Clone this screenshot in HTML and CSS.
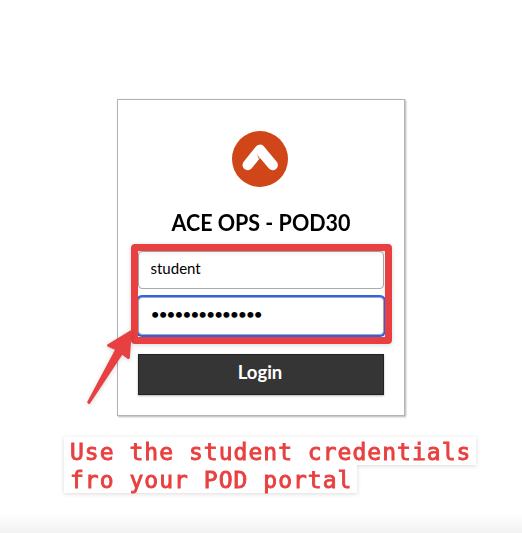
FILE: index.html
```html
<!DOCTYPE html>
<html lang="en">
<head>
<meta charset="utf-8">
<title>ACE OPS - POD30</title>
<link rel="stylesheet" href="styles.css">
</head>
<body>
<main class="page">
  <form class="card">
    <svg class="logo" viewBox="0 0 56 56" aria-hidden="true">
      <circle cx="28" cy="28" r="28" fill="#d04618"/>
      <path d="M15.7 34 L28 18.8 L40.7 34" fill="none" stroke="#fff" stroke-width="10.4" stroke-linecap="round" stroke-linejoin="round"/>
      <path d="M25 23.4 L27.7 27 L26.9 27.9 Z" fill="#d04618"/>
    </svg>
    <h1 class="title">ACE OPS - POD30</h1>
    <input class="field" type="text" value="student" aria-label="Username">
    <div class="field password" aria-label="Password">••••••••••••••</div>
    <button class="login" type="button">Login</button>
  </form>
</main>
<div class="highlight"></div>
<svg class="arrow" viewBox="80 322 60 90" aria-hidden="true">
  <path d="M132 329.5 L107.4 344.6 Q106.6 346 108 346.8 L115 349.7 L87.2 402 Q88 405 90 403.5 L122.3 354.8 L127.5 358.8 Q129.4 359.5 129.8 358 Z" fill="#e84040"/>
</svg>
<p class="note"><span class="line">Use the student credentials</span><span class="line second">fro your POD portal</span></p>
</body>
</html>
```

FILE: styles.css
```css
* {
  box-sizing: border-box;
}

body {
  margin: 0;
  height: 533px;
  overflow: hidden;
  position: relative;
  background: linear-gradient(#fff 0, #fff 512px, #f2f2f2 533px);
  font-family: Lato, sans-serif;
  color: #000;
}

.page {
  padding: 99px 0 0 117px;
}

.card {
  display: flex;
  flex-direction: column;
  width: 288px;
  height: 317px;
  padding: 31px 20px 0;
  background: #fff;
  border: 1px solid #b3b3b3;
  box-shadow: 1px 1px 2px rgba(0, 0, 0, 0.3);
}

.logo {
  width: 56px;
  height: 56px;
  margin-left: 94px;
}

.title {
  margin: 21px 0 15px;
  height: 28px;
  font-size: 23px;
  line-height: 29px;
  font-weight: 700;
  transform: scaleX(0.934);
  text-align: center;
  white-space: nowrap;
}

.field {
  height: 38px;
  width: 246px;
  padding: 0 12px 4px 11.5px;
  border: 1px solid #aaa;
  border-radius: 4px;
  background: #fff;
  font: 15px/34px Lato, sans-serif;
  color: #000;
  outline: none;
}

.password {
  margin-top: 8px;
  font: 16px/32px Lato, sans-serif;
  letter-spacing: -1.35px;
  box-shadow: 0 0 0 2px #2f62f0;
}

.login {
  width: 246px;
  height: 41px;
  margin-top: 19px;
  padding: 0 2px 5px 0;
  border: 1px solid #222;
  background: #353535;
  box-shadow: 0 1px 2px rgba(0, 0, 0, 0.3);
  color: #fff;
  font: 700 18.5px/35px Lato, sans-serif;
}

.highlight {
  position: absolute;
  left: 131px;
  top: 244px;
  width: 261px;
  height: 100px;
  border: 7px solid #e84040;
  border-radius: 4px;
  box-shadow: 0 1px 5px rgba(0, 0, 0, 0.15), inset 0 1px 5px rgba(0, 0, 0, 0.1);
}

.arrow {
  position: absolute;
  left: 80px;
  top: 322px;
  width: 60px;
  height: 90px;
  filter: drop-shadow(0 1px 2px rgba(0, 0, 0, 0.18));
}

.note {
  position: absolute;
  left: 64px;
  top: 437px;
  margin: 0;
  display: flex;
  flex-direction: column;
  align-items: flex-start;
  filter: drop-shadow(0 1px 2px rgba(0, 0, 0, 0.14));
  font: 23px/30px "DejaVu Sans Mono", monospace;
  letter-spacing: 1.02px;
  color: #e84040;
  -webkit-text-stroke: 0.9px #e84040;
}

.line {
  height: 28px;
  padding: 0 5px 0 6px;
  background: #fff;
  white-space: pre;
}
```
